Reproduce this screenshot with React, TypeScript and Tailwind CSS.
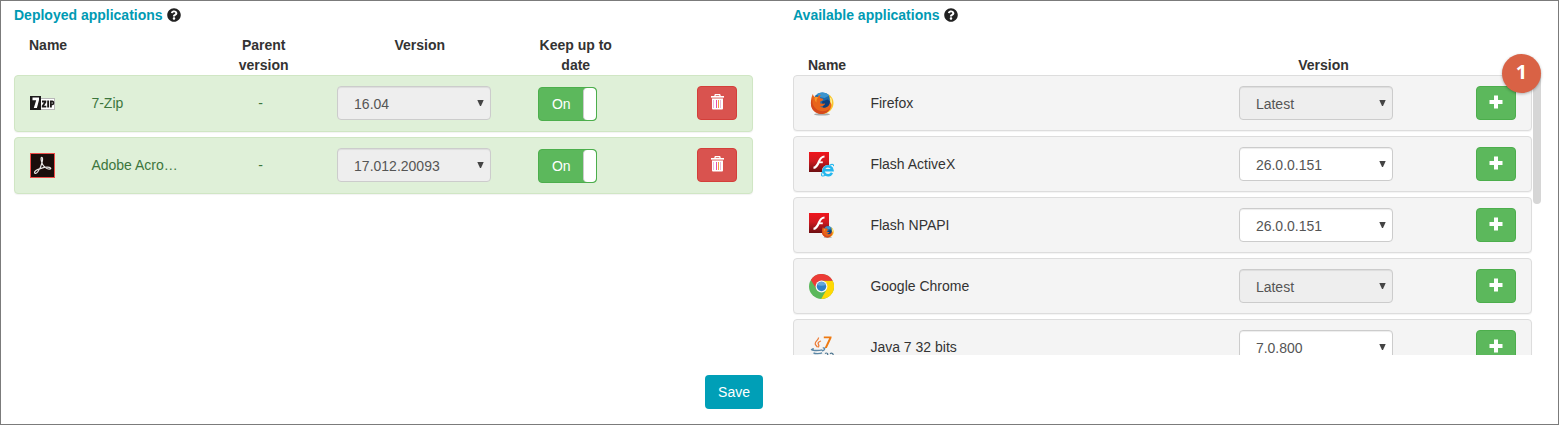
import React from "react";
import { FaQuestionCircle } from "react-icons/fa";

function SevenZipIcon() {
  return (
    <svg width="25" height="25" viewBox="0 0 25 25" aria-hidden="true">
      <rect x="10.5" y="7.5" width="14" height="11" fill="#fff" stroke="#b9b9b9" />
      <rect x="0" y="5" width="11" height="14" fill="#1d1b1b" />
      <path d="M2.500 6.500h6.500v2.400L6.900 17H3.800L6.200 9.200H2.500z" fill="#fff" />
      <path d="M12 9.500h4.300v1.800l-2.200 3.400h2.200v1.900h-4.500v-1.800l2.200-3.400H12zM17.200 9.500h1.900v7.100h-1.900z" fill="#1d1b1b" />
      <path
        d="M20 9.500h2.400a1.800 1.800 0 0 1 1.800 1.800v1.200a1.800 1.800 0 0 1-1.800 1.800h-.6v2.300H20zm1.800 1.600v1.800h.6v-1.800z"
        fill="#1d1b1b"
        fillRule="evenodd"
      />
    </svg>
  );
}

function AcrobatIcon() {
  return (
    <svg width="25" height="25" viewBox="0 0 25 25" aria-hidden="true">
      <rect x="0.5" y="0.5" width="24" height="24" fill="#1b0d0b" stroke="#ee4b48" />
      <path
        d="M4.500 19.800c-.3-1.600 2.500-3.200 5.800-4.200 3.900-1.200 9-1.600 10.300-.6.800 1-1.300 1.500-3.600.5-2.500-1.200-4.600-3.600-5.400-6.600-.6-2.400-.8-4.400.1-4.500 1.100 0 1 2.300.5 4.500-.7 3.300-2.300 7-4.200 9.600-1.200 1.600-2.900 2.500-3.500 1.300z"
        fill="none"
        stroke="#e9e6e5"
        strokeWidth="1.200"
      />
    </svg>
  );
}

function FirefoxMark() {
  return (
    <>
      <ellipse cx="13" cy="23.300" rx="8" ry="1.300" fill="#a9a9a9" />
      <circle cx="13.500" cy="11" r="9.500" fill="#1c6cae" />
      <path d="M7.500 3.300C11.500.7 17 .9 20.500 4.500l-5 2.500-5-1z" fill="#3b95cf" />
      <path d="M13 10.500l5.500-2 3 2-1 6-6 3z" fill="#0e3f7c" />
      <path
        d="M19.500 3.200c3.200 1.900 5 5 5 8.700 0 6-4.900 10.800-11 10.900 4.600-1.800 7.400-5.400 7.500-10 0-3.300-.2-6.500-1.500-9.600z"
        fill="#f9c72b"
      />
      <path d="M22 6.500c1.300 2.800 1.300 6-.1 8.800-.2-3-.2-6-.9-8.300z" fill="#fff0a0" />
      <path
        d="M3.800 3c.3 1.300.9 2.200 1.700 2.900 1.100-.3 2.200-.3 3.300 0 .9-1.300 1.900-1.900 3.200-2.100-.9 1.100-1.200 2-1 3.100l3.300 1c-.1 1.600-1.500 1.900-2.900 2.600l-.2 2c1.700-.2 3.200.5 5 .1-.8 2.300-3.100 3.100-5.400 2.700 2.400 2 6.300 1.800 8.500-.4 1.100-1.100 1.600-2.600 1.700-4 .8.700 1.300 1.700 1.500 2.800-.4 5.300-4.900 9.200-10.200 9.200C6.500 22.900 1.900 18.200 1.900 12c0-3.200.5-6.200 1.900-9z"
        fill="#e8641b"
      />
      <path d="M3.400 7.500c-.6 5.500 1.600 10 6.600 12 4 1.500 8.500.5 11.200-2.600-1.500 3.800-5 6-8.900 6C6.500 22.900 2 18.500 1.900 12.500c0-2 .5-3.500 1.500-5z" fill="#d5491c" />
      <path d="M5.500 6.500c1.300-.5 2.600-.6 3.600-.2-1.400 1.500-1.900 3.200-1.600 5.100-1.400-1.200-2-3-2-4.900z" fill="#f59a2a" />
    </>
  );
}

function FirefoxIcon() {
  return (
    <svg width="25" height="25" viewBox="0 0 25 25" aria-hidden="true">
      <FirefoxMark />
    </svg>
  );
}

function FlashMark({ id }: { id: string }) {
  return (
    <>
      <defs>
        <linearGradient id={id} x1="0" y1="0" x2="0" y2="1">
          <stop offset="0" stopColor="#f0151c" />
          <stop offset="0.450" stopColor="#cf1a20" />
          <stop offset="1" stopColor="#6d0f12" />
        </linearGradient>
      </defs>
      <rect x="0" y="0" width="20" height="20" fill={`url(#${id})`} />
      <path d="M15.500 4.500c-3.300.1-4.400 2.300-5.500 5-1.200 3.200-2.300 6-5.500 6.300" fill="none" stroke="#fff" strokeWidth="2.200" />
      <path d="M9.500 10.300h4.300" stroke="#fff" strokeWidth="1.800" />
    </>
  );
}

function FlashActiveXIcon() {
  return (
    <svg width="25" height="25" viewBox="0 0 25 25" aria-hidden="true">
      <FlashMark id="flash-activex" />
      <circle cx="18.700" cy="18.700" r="5.700" fill="#f4f4f4" />
      <path d="M23 20.900a4.500 4.500 0 1 1 .5-2.600h-8.300" fill="none" stroke="#25b7ee" strokeWidth="2.500" />
      <path
        d="M20.500 13.300c2.500-1.300 4.500-1.300 4 .9M14.200 18.500c-1.700 2.700-2.400 5.400-.7 5.500 1 .1 2.300-.4 3.400-1.100"
        fill="none"
        stroke="#25b7ee"
        strokeWidth="1.100"
      />
    </svg>
  );
}

function FlashNpapiIcon() {
  return (
    <svg width="25" height="25" viewBox="0 0 25 25" aria-hidden="true">
      <FlashMark id="flash-npapi" />
      <g transform="translate(12 12.500) scale(0.520)">
        <FirefoxMark />
      </g>
    </svg>
  );
}

function ChromeIcon() {
  return (
    <svg width="25" height="25" viewBox="0 0 25 25" aria-hidden="true">
      <circle cx="12.500" cy="12.500" r="12.500" fill="#5bb85b" />
      <path d="M12.500 6.800h11.200A12.500 12.500 0 0 1 12.200 25l5.400-9.500z" fill="#ffd803" />
      <path d="M1.900 5.900A12.500 12.500 0 0 1 23.700 6.800H12.500a5.700 5.700 0 0 0-5.300 7.900z" fill="#ec3b36" />
      <circle cx="12.500" cy="12.500" r="5.900" fill="#f7f7f7" />
      <circle cx="12.500" cy="12.500" r="4.700" fill="#2f81c7" />
      <path d="M8.200 11a4.500 4.500 0 0 1 8.600 0c-2.800 1-5.800 1-8.600 0z" fill="#64a8dc" />
    </svg>
  );
}

function JavaIcon() {
  return (
    <svg width="25" height="25" viewBox="0 0 25 25" aria-hidden="true">
      <path d="M14.800 1.500h7.700v1.600l-4.700 9.900h-2.200l4.600-9.700h-5.400z" fill="#ee7a12" />
      <path
        d="M9.500 2.500c.5 2.500-3.800 3.800-3.300 6.300.2 1.200 1.500 2 2.300 3.400M12 6c-2.400.8-3.600 2-2.500 3.500.7 1 .4 2-.2 2.800"
        fill="none"
        stroke="#ec7b35"
        strokeWidth="1.300"
      />
      <path
        d="M4.800 13.800c-3.300.6-3.100 1.600 1 1.700 3 .1 5.800-.2 7.600-.7M13.800 13c2.700-.7 2.500 2-.6 3M4.500 17.900c1.500 1 6.500 1 8.600 0M5.500 20.400c1.800.9 4.500.9 6.600 0M2.500 21.900c-2.500 1.500 3 2.700 8 2.400"
        fill="none"
        stroke="#5b87a6"
        strokeWidth="1.400"
      />
      <path
        d="M16 18.500c1.700-1.200 3.800.2 2.200 1.900 2.500.8 1 4-2.200 2.700M21 18.700c1.700-1.500 4 .2 2.700 2.100l-2.500 2.700h3.500"
        fill="none"
        stroke="#4d7590"
        strokeWidth="1.200"
      />
    </svg>
  );
}

function HelpButton({ label }: { label: string }) {
  return (
    <button type="button" aria-label={label} className="-mt-px flex text-[#222]">
      <FaQuestionCircle size={14} />
    </button>
  );
}

function VersionSelect({ label, value, disabled }: { label: string; value: string; disabled?: boolean }) {
  return (
    <div className="relative">
      <select
        aria-label={label}
        disabled={disabled}
        defaultValue={value}
        className="block h-[34px] w-full appearance-none rounded border border-[#ccc] bg-white pr-6 pb-0.5 pl-4 text-[#555] opacity-100 shadow-[inset_0_1px_1px_rgba(0,0,0,0.075)] disabled:bg-[#eee]"
      >
        <option>{value}</option>
      </select>
      <svg
        width="7"
        height="6"
        viewBox="0 0 7 6"
        aria-hidden="true"
        className="pointer-events-none absolute top-[14px] right-[7px]"
      >
        <path d="M0.300 0h6.400L4 6H3z" fill="#444" />
      </svg>
    </div>
  );
}

function Toggle({ label }: { label: string }) {
  return (
    <label className="inline-flex h-[34px] w-[59px] cursor-pointer overflow-hidden rounded border border-[#4cae4c] bg-[#5cb85c] align-top text-white">
      <input type="checkbox" defaultChecked aria-label={label} className="sr-only" />
      <span className="flex-1 text-center leading-8">On</span>
      <span className="w-[13px] rounded border-l border-[#ccc] bg-white" />
    </label>
  );
}

function TrashIcon() {
  return (
    <svg width="13" height="16" viewBox="0 0 13 16" aria-hidden="true" className="mb-0.5">
      <path d="M4 2.500V1.500a1 1 0 0 1 1-1h3a1 1 0 0 1 1 1v1" fill="none" stroke="#fff" strokeWidth="1.300" />
      <rect x="0" y="2" width="13" height="1.600" fill="#fff" />
      <path d="M1 4.500h11v10a1 1 0 0 1-1 1H2a1 1 0 0 1-1-1z" fill="#fff" />
      <path d="M2.500 6v8M9.500 6v8" stroke="#e8bcd8" />
      <path d="M5.500 6v8" stroke="#e44fb0" />
      <path d="M7.500 6v8" stroke="#f5a040" />
    </svg>
  );
}

function PlusIcon() {
  return (
    <svg width="14" height="14" viewBox="0 0 14 14" aria-hidden="true" className="mb-0.5">
      <path d="M5 .500h4V5h4.500v4H9v4.500H5V9H.500V5H5z" fill="#fff" />
    </svg>
  );
}

const deployed = [
  { name: "7-Zip", Icon: SevenZipIcon, version: "16.04" },
  { name: "Adobe Acro…", Icon: AcrobatIcon, version: "17.012.20093" },
];

const available = [
  { name: "Firefox", Icon: FirefoxIcon, version: "Latest", locked: true },
  { name: "Flash ActiveX", Icon: FlashActiveXIcon, version: "26.0.0.151", locked: false },
  { name: "Flash NPAPI", Icon: FlashNpapiIcon, version: "26.0.0.151", locked: false },
  { name: "Google Chrome", Icon: ChromeIcon, version: "Latest", locked: true },
  { name: "Java 7 32 bits", Icon: JavaIcon, version: "7.0.800", locked: false },
];

function DeployedPanel() {
  return (
    <section>
      <h2 className="flex items-center gap-1 font-bold text-[#009ab3]">
        Deployed applications <HelpButton label="About deployed applications" />
      </h2>
      <table className="mt-[10px] block">
        <thead className="block">
          <tr className="grid min-h-10 grid-cols-12 text-center">
            <th className="col-span-3 px-[15px] text-left">Name</th>
            <th className="col-span-2 px-[15px]">Parent version</th>
            <th className="col-span-3 px-[15px]">Version</th>
            <th className="col-span-2 px-[15px]">Keep up to date</th>
          </tr>
        </thead>
        <tbody className="flex flex-col gap-[5px] pr-[10px]">
          {deployed.map(({ name, Icon, version }) => (
            <tr
              key={name}
              className="grid grid-cols-12 rounded border border-[#d0e6c4] bg-[#dff0d8] py-[10px] leading-[34px] text-[#3c763d] shadow-[0_1px_1px_rgba(0,0,0,0.05)]"
            >
              <td className="flex h-[34px] items-center pl-[15px]">
                <Icon />
              </td>
              <td className="col-span-2 truncate px-[15px]">{name}</td>
              <td className="col-span-2 text-center">-</td>
              <td className="col-span-3 px-[15px]">
                <VersionSelect label={`Version of ${name}`} value={version} disabled />
              </td>
              <td className="col-span-2 pt-px text-center">
                <Toggle label={`Keep ${name} up to date`} />
              </td>
              <td className="col-span-2 flex justify-end pr-[15px]">
                <button
                  type="button"
                  aria-label={`Remove ${name}`}
                  className="flex h-[34px] w-10 items-center justify-center rounded border border-[#d43f3a] bg-[#d9534f]"
                >
                  <TrashIcon />
                </button>
              </td>
            </tr>
          ))}
        </tbody>
      </table>
    </section>
  );
}

function AvailablePanel() {
  return (
    <section>
      <h2 className="flex items-center gap-1 font-bold text-[#009ab3]">
        Available applications <HelpButton label="About available applications" />
      </h2>
      <div className="relative mt-[10px]">
        <table className="block">
          <thead className="block">
            <tr className="grid min-h-10 grid-cols-12 items-end text-center">
              <th className="col-span-7 px-[15px] text-left">Name</th>
              <th className="col-span-3 px-[15px]">Version</th>
            </tr>
          </thead>
          <tbody className="flex max-h-[280px] flex-col gap-[5px] overflow-y-auto pr-[10px] [scrollbar-width:none]">
            {available.map(({ name, Icon, version, locked }) => (
              <tr
                key={name}
                className="grid shrink-0 grid-cols-12 rounded border border-[#ddd] bg-[#f4f4f4] py-[10px] leading-[34px] shadow-[0_1px_1px_rgba(0,0,0,0.05)]"
              >
                <td className="flex h-[34px] items-center pl-[15px]">
                  <Icon />
                </td>
                <td className="col-span-6 truncate px-[15px]">{name}</td>
                <td className="col-span-3 px-[15px]">
                  <VersionSelect label={`Version of ${name}`} value={version} disabled={locked} />
                </td>
                <td className="col-span-2 flex justify-end pr-[15px]">
                  <button
                    type="button"
                    aria-label={`Add ${name}`}
                    className="flex h-[34px] w-10 items-center justify-center rounded border border-[#4cae4c] bg-[#5cb85c]"
                  >
                    <PlusIcon />
                  </button>
                </td>
              </tr>
            ))}
          </tbody>
        </table>
        <div className="absolute top-10 right-px h-[129px] w-2 rounded-b bg-[#d6d6d6]" />
        <div className="absolute top-[19px] right-px flex size-[39px] items-center justify-center rounded-full bg-[#d96245] pb-1 font-['Open_Sans',sans-serif] text-[20px] font-bold text-white shadow-[0_1px_3px_rgba(0,0,0,0.3)]">
          1
        </div>
      </div>
    </section>
  );
}

export default function App() {
  return (
    <main className="border border-[#7b7b7b] bg-white pt-1 pr-4 pb-[15px] pl-[13px] font-['Liberation_Sans',Arial,sans-serif] text-sm leading-5 text-[#333]">
      <form onSubmit={(event) => event.preventDefault()} className="grid grid-cols-2 gap-x-[30px] gap-y-5">
        <DeployedPanel />
        <AvailablePanel />
        <div className="flex justify-end">
          <button type="submit" className="h-[34px] rounded bg-[#009fb7] px-[13px] text-white">
            Save
          </button>
        </div>
      </form>
    </main>
  );
}
